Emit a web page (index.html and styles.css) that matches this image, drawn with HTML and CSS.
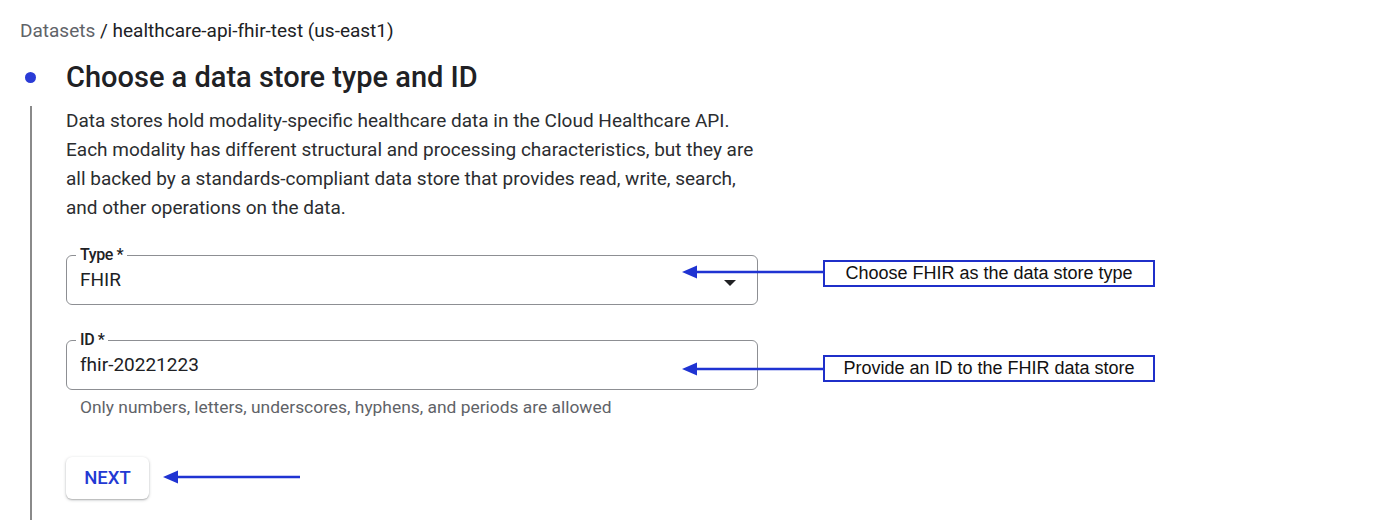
FILE: index.html
```html
<!DOCTYPE html>
<html>
<head>
<meta charset="utf-8">
<link rel="stylesheet" href="styles.css">
</head>
<body>
<div class="page">
  <div class="crumb"><span class="crumb-root">Datasets</span> / <span class="crumb-cur">healthcare-api-fhir-test (us-east1)</span></div>
  <div class="step">
    <div class="rail">
      <div class="dot"></div>
      <div class="line"></div>
    </div>
    <div class="content">
      <h1 class="title">Choose a data store type and ID</h1>
      <p class="desc">Data stores hold modality-specific healthcare data in the Cloud Healthcare API. Each modality has different structural and processing characteristics, but they are all backed by a standards-compliant data store that provides read, write, search, and other operations on the data.</p>
      <fieldset class="field field-type">
        <legend>Type *</legend>
        <div class="field-row">
          <span class="value">FHIR</span>
          <span class="caret"></span>
        </div>
      </fieldset>
      <fieldset class="field field-id">
        <legend>ID *</legend>
        <div class="field-row">
          <span class="value">fhir-20221223</span>
        </div>
      </fieldset>
      <div class="hint">Only numbers, letters, underscores, hyphens, and periods are allowed</div>
      <button class="next">NEXT</button>
    </div>
  </div>
</div>

<div class="note note-1">Choose FHIR as the data store type</div>
<div class="note note-2">Provide an ID to the FHIR data store</div>

<svg class="arrow arrow-1" width="142" height="14" viewBox="0 0 142 14"><path d="M14 7H142" stroke="#1f33d2" stroke-width="2.4"/><path d="M0 7L15 0.5V13.5Z" fill="#1f33d2"/></svg>
<svg class="arrow arrow-2" width="142" height="14" viewBox="0 0 142 14"><path d="M14 7H142" stroke="#1f33d2" stroke-width="2.4"/><path d="M0 7L15 0.5V13.5Z" fill="#1f33d2"/></svg>
<svg class="arrow arrow-3" width="137" height="14" viewBox="0 0 137 14"><path d="M14 7H137" stroke="#1f33d2" stroke-width="2.4"/><path d="M0 7L15 0.5V13.5Z" fill="#1f33d2"/></svg>
</body>
</html>
```

FILE: styles.css
```css
html, body {
  margin: 0;
  padding: 0;
  background: #ffffff;
}
body {
  width: 1400px;
  height: 520px;
  overflow: hidden;
  position: relative;
  font-family: Roboto, "Noto Sans", sans-serif;
  color: #202124;
}
.page {
  padding: 20px 0 0 20px;
}
.crumb {
  font-size: 19px;
  line-height: 22px;
  height: 22px;
}
.crumb-root { color: #5f6368; }
.crumb-cur { color: #202124; }

.step {
  display: grid;
  grid-template-columns: 46px 1fr;
  margin-top: 19px;
}
.rail {
  display: flex;
  flex-direction: column;
  align-items: flex-start;
}
.dot {
  width: 11px;
  height: 11px;
  border-radius: 50%;
  background: #2a3bd6;
  margin: 11px 0 0 5px;
}
.line {
  width: 2px;
  height: 430px;
  margin: 23px 0 0 10px;
  background: #8a8a8a;
}
.content {
  display: flex;
  flex-direction: column;
  align-items: flex-start;
}
.title {
  margin: 0;
  font-size: 29px;
  line-height: 32px;
  font-weight: 500;
  color: #202124;
}
.desc {
  margin: 13px 0 0 0;
  width: 696px;
  font-size: 19px;
  line-height: 29px;
  color: #2b2d30;
}
.field {
  box-sizing: border-box;
  width: 692px;
  margin: 24px 0 0 0;
  padding: 0 12px 0 10px;
  border: 1px solid #8d8f93;
  border-radius: 6px;
  min-width: 0;
}
.field legend {
  padding: 0 4px 0 4px;
  margin-left: -1px;
  font-size: 16px;
  line-height: 18px;
  font-weight: 500;
  letter-spacing: -0.4px;
  color: #202124;
}
.field-row {
  display: flex;
  align-items: center;
  justify-content: space-between;
  height: 40px;
  padding: 0 0 0 3px;
}
.field-row .value {
  font-size: 19px;
  line-height: 22px;
  color: #202124;
  margin-top: -8px;
}
.caret {
  width: 0;
  height: 0;
  border-left: 6px solid transparent;
  border-right: 6px solid transparent;
  border-top: 6px solid #202124;
  margin: -3px 9px 0 0;
}
.field-id {
  margin-top: 26px;
}
.hint {
  margin: 7px 0 0 14px;
  font-size: 17.4px;
  line-height: 20px;
  color: #5f6368;
}
.next {
  margin-top: 40px;
  width: 83px;
  height: 42px;
  border: none;
  border-radius: 6px;
  background: #ffffff;
  box-shadow: 0 1px 3px rgba(60, 64, 67, 0.35), 0 1px 1px rgba(60, 64, 67, 0.15);
  font-family: Roboto, "Noto Sans", sans-serif;
  font-size: 18.5px;
  font-weight: 500;
  color: #2339d3;
  padding: 0;
}

/* annotation overlays */
.note {
  position: absolute;
  left: 823px;
  width: 332px;
  height: 27px;
  box-sizing: border-box;
  border: 2px solid #1f2fc9;
  background: #ffffff;
  font-family: "Liberation Sans", Arial, sans-serif;
  font-size: 18px;
  line-height: 23px;
  text-align: center;
  color: #111111;
}
.note-1 { top: 260px; }
.note-2 { top: 355px; }
.arrow {
  position: absolute;
}
.arrow-1 { left: 682px; top: 265px; }
.arrow-2 { left: 682px; top: 362px; }
.arrow-3 { left: 163px; top: 470px; }
```
